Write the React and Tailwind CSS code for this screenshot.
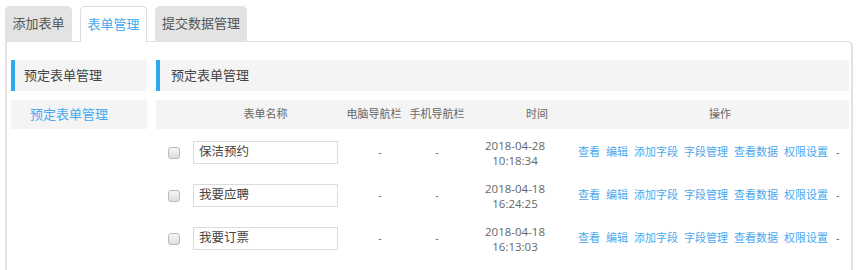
const rows = [
  { name: '保洁预约', date: '2018-04-28', time: '10:18:34' },
  { name: '我要应聘', date: '2018-04-18', time: '16:24:25' },
  { name: '我要订票', date: '2018-04-18', time: '16:13:03' },
  { name: '', date: '', time: '' },
]

const actions = ['查看', '编辑', '添加字段', '字段管理', '查看数据', '权限设置']

export default function App() {
  return (
    <div
      className="w-[859px] h-[270px] overflow-hidden bg-white text-[#444] whitespace-nowrap"
      style={{ fontFamily: '"Open Sans", "Noto Sans CJK SC", sans-serif' }}
    >
      {/* Tabs */}
      <div className="flex items-end pl-[5px] pt-[5px] h-[41px] gap-[8px]">
        <div className="w-[67px] h-[35px] rounded-t-[5px] bg-[#e3e3e3] text-[#555] text-[13px] flex items-center justify-center">
          添加表单
        </div>
        <div className="w-[67px] h-[36px] rounded-t-[5px] bg-white border border-b-0 border-[#dcdcdc] text-[#45a8ef] text-[13px] flex items-center justify-center relative top-[1px]">
          表单管理
        </div>
        <div className="w-[92px] h-[35px] rounded-t-[5px] bg-[#e3e3e3] text-[#555] text-[13px] flex items-center justify-center">
          提交数据管理
        </div>
      </div>

      {/* Panel */}
      <div className="ml-[5px] w-[848px] h-[240px] border-t border-l-2 border-r-2 border-[#e2e2e2] rounded-tr-[5px] flex pt-[18px] pl-[4px] gap-[9px]">
        {/* Sidebar */}
        <div className="w-[136px] shrink-0">
          <div className="h-[31px] bg-[#f4f4f4] border-l-4 border-[#2ea8ee] flex items-center pl-[9px] text-[13px] text-[#444]">
            预定表单管理
          </div>
          <div className="mt-[9px] h-[29px] bg-[#f4f4f4] flex items-center pl-[19px] text-[13px] text-[#45a8ef]">
            预定表单管理
          </div>
        </div>

        {/* Main */}
        <div className="w-[693px] shrink-0">
          <div className="h-[31px] bg-[#f4f4f4] border-l-4 border-[#2ea8ee] flex items-center pl-[11px] text-[13px] text-[#444]">
            预定表单管理
          </div>

          {/* Table header */}
          <div className="mt-[9px] h-[29px] bg-[#f4f4f4] flex items-center text-[11px] text-[#666]">
            <div className="w-[37px] shrink-0" />
            <div className="w-[145px] shrink-0 text-center">表单名称</div>
            <div className="w-[72px] shrink-0 text-center">电脑导航栏</div>
            <div className="w-[54px] shrink-0 flex justify-center">
              <span className="shrink-0">手机导航栏</span>
            </div>
            <div className="w-[146px] shrink-0 text-center">时间</div>
            <div className="w-[220px] shrink-0 text-center">操作</div>
          </div>

          {/* Rows */}
          <div className="mt-[2px]">
            {rows.map((r, i) => (
              <div key={i} className="h-[43px] flex items-center text-[11px] text-[#666]">
                <div className="w-[37px] shrink-0 pl-[12px]">
                  <div className="w-[12px] h-[12px] rounded-[3px] border border-[#b9b9b9] bg-gradient-to-b from-[#f7f7f7] to-[#dedede]" />
                </div>
                <div className="w-[145px] shrink-0 h-[23px] border border-[#dcdcdc] flex items-center pl-[5px] text-[12.5px] text-[#444]">
                  {r.name}
                </div>
                {r.date && (
                  <>
                    <div className="w-[84px] shrink-0 text-center">-</div>
                    <div className="w-[30px] shrink-0 text-center">-</div>
                    <div className="w-[126px] shrink-0 text-center leading-[15px] text-[11.5px]">
                      <div>{r.date}</div>
                      <div>{r.time}</div>
                    </div>
                    <div className="flex items-center gap-[6px] text-[#4aa9ef]">
                      {actions.map((a) => (
                        <span key={a} className="shrink-0 cursor-pointer">{a}</span>
                      ))}
                      <span className="shrink-0 text-[#666] ml-[2px]">-</span>
                    </div>
                  </>
                )}
              </div>
            ))}
          </div>
        </div>
      </div>
    </div>
  )
}
